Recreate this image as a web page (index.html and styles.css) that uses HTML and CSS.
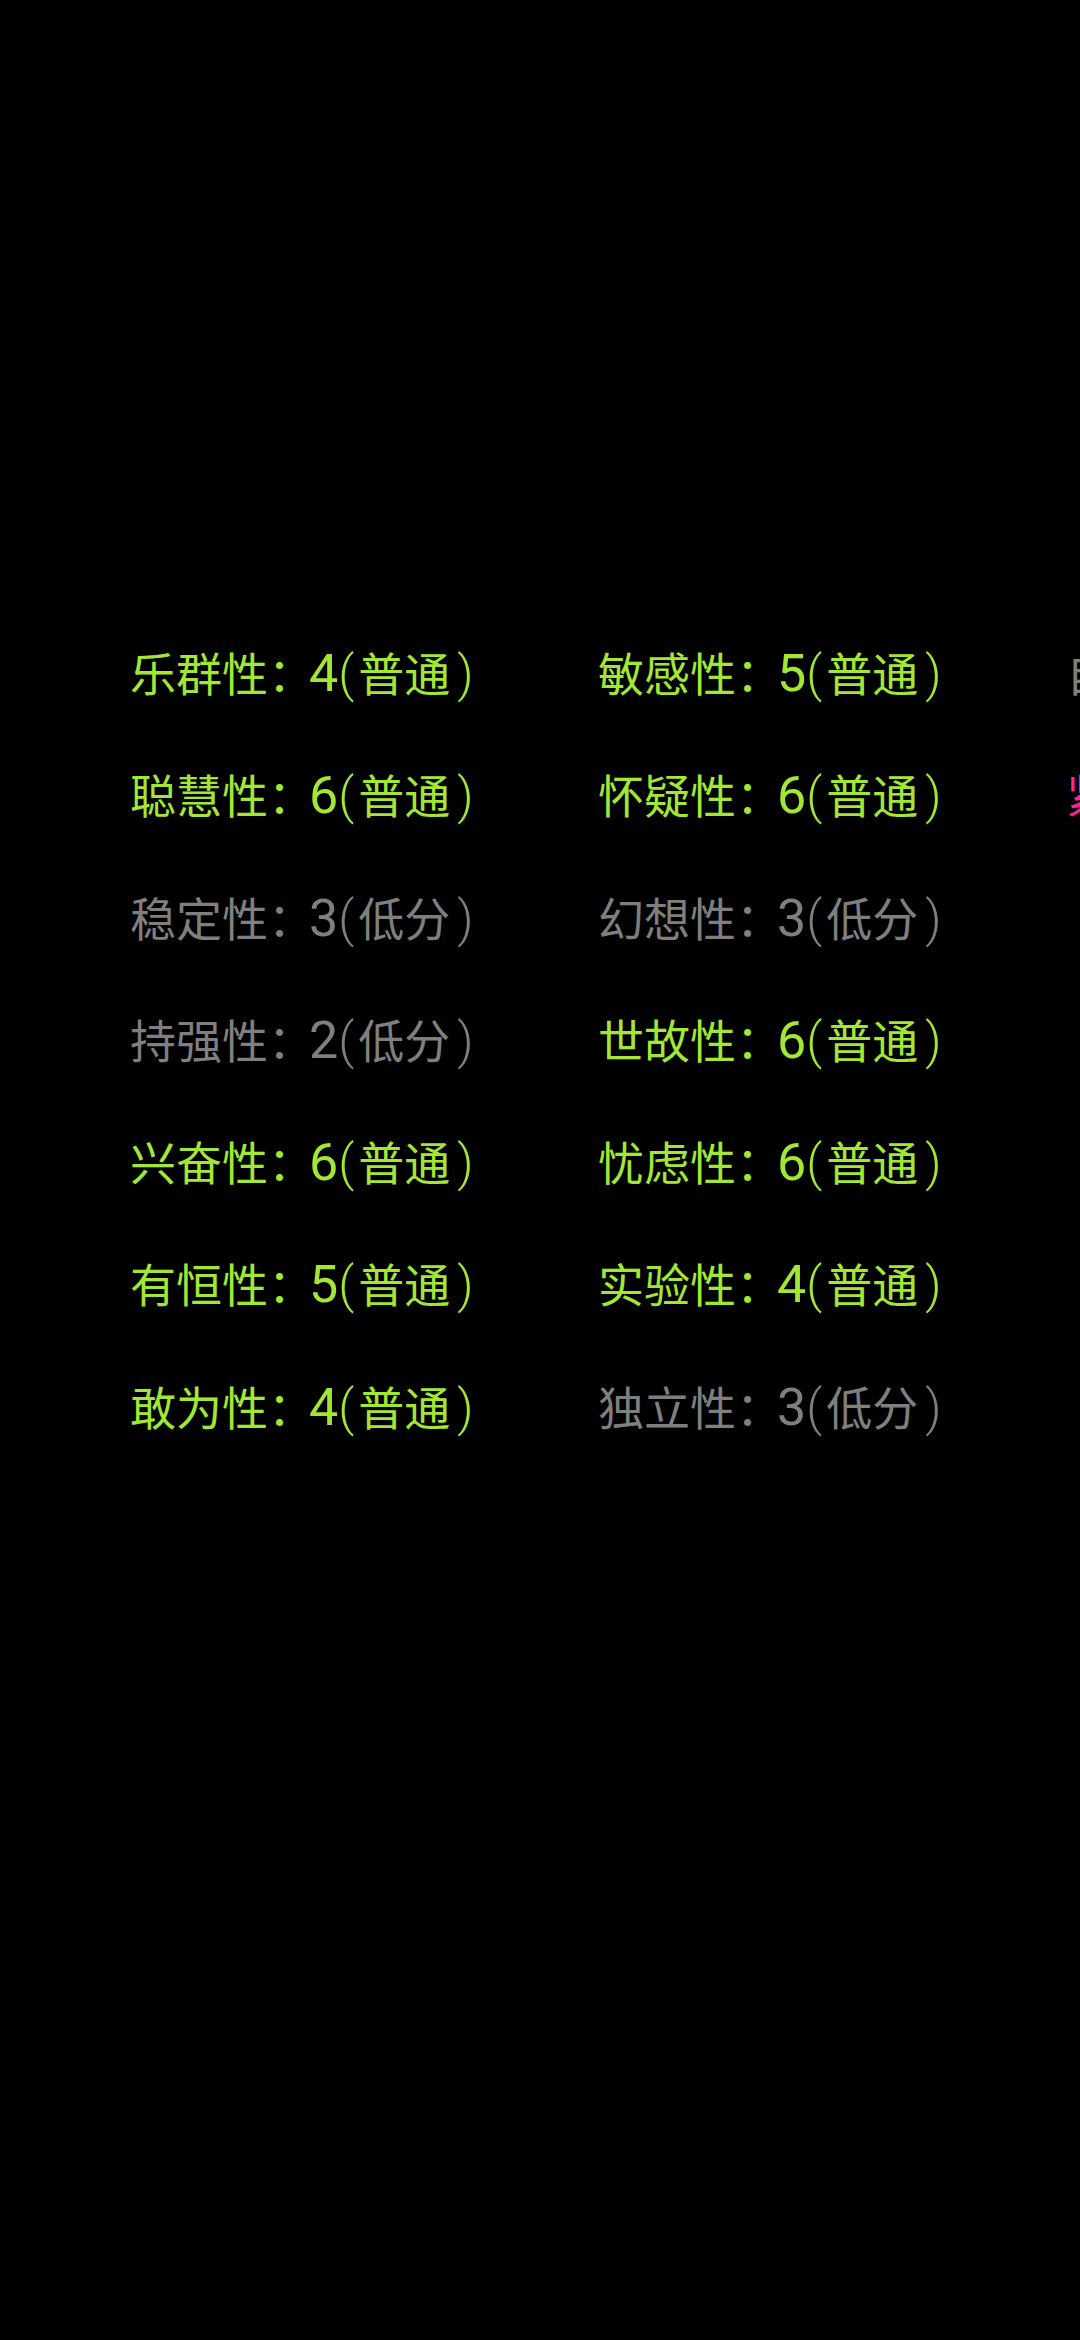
FILE: index.html
```html
<!DOCTYPE html>
<html lang="zh-CN">
<head>
<meta charset="utf-8">
<link rel="stylesheet" href="styles.css">
</head>
<body>
<div class="page">
  <div class="board">
    <div class="col">
      <div class="item mid">乐群性<span class="colon">：</span><span class="num">4</span><span class="po">(</span>普通<span class="pc">)</span></div>
      <div class="item mid">聪慧性<span class="colon">：</span><span class="num">6</span><span class="po">(</span>普通<span class="pc">)</span></div>
      <div class="item low">稳定性<span class="colon">：</span><span class="num">3</span><span class="po">(</span>低分<span class="pc">)</span></div>
      <div class="item low">持强性<span class="colon">：</span><span class="num">2</span><span class="po">(</span>低分<span class="pc">)</span></div>
      <div class="item mid">兴奋性<span class="colon">：</span><span class="num">6</span><span class="po">(</span>普通<span class="pc">)</span></div>
      <div class="item mid">有恒性<span class="colon">：</span><span class="num">5</span><span class="po">(</span>普通<span class="pc">)</span></div>
      <div class="item mid">敢为性<span class="colon">：</span><span class="num">4</span><span class="po">(</span>普通<span class="pc">)</span></div>
    </div>
    <div class="col">
      <div class="item mid">敏感性<span class="colon">：</span><span class="num">5</span><span class="po">(</span>普通<span class="pc">)</span></div>
      <div class="item mid">怀疑性<span class="colon">：</span><span class="num">6</span><span class="po">(</span>普通<span class="pc">)</span></div>
      <div class="item low">幻想性<span class="colon">：</span><span class="num">3</span><span class="po">(</span>低分<span class="pc">)</span></div>
      <div class="item mid">世故性<span class="colon">：</span><span class="num">6</span><span class="po">(</span>普通<span class="pc">)</span></div>
      <div class="item mid">忧虑性<span class="colon">：</span><span class="num">6</span><span class="po">(</span>普通<span class="pc">)</span></div>
      <div class="item mid">实验性<span class="colon">：</span><span class="num">4</span><span class="po">(</span>普通<span class="pc">)</span></div>
      <div class="item low">独立性<span class="colon">：</span><span class="num">3</span><span class="po">(</span>低分<span class="pc">)</span></div>
    </div>
    <div class="col">
      <div class="item low">自律性<span class="colon">：</span><span class="num">3</span><span class="po">(</span>低分<span class="pc">)</span></div>
      <div class="item high">紧张性<span class="colon">：</span><span class="num">8</span><span class="po">(</span>高分<span class="pc">)</span></div>
    </div>
  </div>
</div>
</body>
</html>
```
FILE: styles.css
```css
html, body {
  margin: 0;
  padding: 0;
  background: #000;
}
.page {
  width: 1080px;
  height: 2340px;
  overflow: hidden;
  background: #000;
  font-family: Roboto, "Noto Sans CJK SC", sans-serif;
}
.board {
  display: flex;
  padding: 613px 0 0 130px;
}
.col {
  flex: 0 0 468px;
  display: flex;
  flex-direction: column;
}
.item {
  height: 122.3px;
  line-height: 122.3px;
  font-size: 46px;
  white-space: nowrap;
}
.colon {
  letter-spacing: -5px;
}
.num {
  font-size: 52px;
}
.po {
  font-size: 50px;
  font-weight: 300;
  padding-right: 4px;
}
.pc {
  font-size: 50px;
  font-weight: 300;
  padding-left: 7px;
}
.mid { color: #a2e833; }
.low { color: #7f7f7f; }
.high { color: #ff2596; }
```
